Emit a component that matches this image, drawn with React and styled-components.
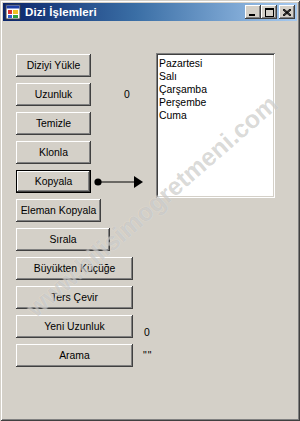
import React from 'react';
import styled, { createGlobalStyle } from 'styled-components';

const GlobalStyle = createGlobalStyle`
	html, body {
		margin: 0;
		padding: 0;
		background: #d4d0c8;
	}
	* {
		box-sizing: border-box;
	}
`;

const Window = styled.div`
	position: relative;
	width: 300px;
	height: 421px;
	padding: 3px;
	background: #d4d0c8;
	box-shadow: inset 1px 1px #d4d0c8, inset -1px -1px #404040,
		inset 2px 2px #ffffff, inset -2px -2px #808080;
	overflow: hidden;
	font-family: 'Liberation Sans', Arial, sans-serif;
	font-size: 10.4px;
	color: #000;
`;

const TitleBar = styled.div`
	display: flex;
	align-items: center;
	height: 18px;
	padding: 0 2px 0 2px;
	background: linear-gradient(to right, #0a246a 0%, #3a6ea5 45%, #a6caf0 100%);
`;

const TitleText = styled.span`
	margin-left: 4px;
	flex: 1;
	color: #fff;
	font-weight: bold;
	font-size: 11.5px;
	letter-spacing: 0.1px;
`;

const CaptionButton = styled.div`
	width: 16px;
	height: 14px;
	margin-left: ${(p) => (p.$gap ? '2px' : '0')};
	display: flex;
	align-items: center;
	justify-content: center;
	background: #d4d0c8;
	box-shadow: inset -1px -1px #404040, inset 1px 1px #ffffff,
		inset -2px -2px #808080, inset 2px 2px #d4d0c8;
`;

const Content = styled.div`
	display: flex;
	align-items: flex-start;
	padding: 33px 0 0 13px;
`;

const Column = styled.div`
	display: flex;
	flex-direction: column;
	gap: 6px;
	width: 140px;
`;

const Row = styled.div`
	display: flex;
	align-items: center;
	height: 23px;
`;

const Button = styled.div`
	width: ${(p) => p.$w}px;
	height: 23px;
	display: flex;
	align-items: center;
	justify-content: center;
	background: #d4d0c8;
	white-space: nowrap;
	box-shadow: ${(p) =>
		p.$default
			? 'inset 0 0 0 1px #000, inset -2px -2px #404040, inset 2px 2px #ffffff, inset -3px -3px #808080'
			: 'inset -1px -1px #404040, inset 1px 1px #ffffff, inset -2px -2px #808080, inset 2px 2px #d4d0c8'};
`;

const SideLabel = styled.span`
	margin-left: ${(p) => p.$left}px;
	padding-top: ${(p) => (p.$drop ? 12 : 0)}px;
	line-height: 13px;
	letter-spacing: ${(p) => (p.$wide ? '1px' : '0')};
`;

const ArrowWrap = styled.div`
	margin-left: 3px;
	display: flex;
	align-items: center;
	padding-top: 1px;
`;

const ListBox = styled.div`
	width: 119px;
	height: 145px;
	margin-top: -1px;
	padding: 4px 3px;
	background: #fff;
	line-height: 13px;
	box-shadow: inset 1px 1px #808080, inset -1px -1px #ffffff,
		inset 2px 2px #404040, inset -2px -2px #d4d0c8;
`;

const Watermark = styled.div`
	position: absolute;
	left: 152px;
	top: 206px;
	transform: translate(-50%, -50%) rotate(-41deg);
	white-space: nowrap;
	font-family: 'Liberation Sans', Arial, sans-serif;
	font-weight: bold;
	font-size: 25px;
	color: rgba(130, 128, 122, 0.3);
	text-shadow: 0 0 1px rgba(255, 255, 255, 0.6);
	pointer-events: none;
`;

const AppIcon = () => (
	<svg width="16" height="16" viewBox="0 0 16 16">
		<rect x="1" y="1" width="14" height="14" fill="#fff" stroke="#404040" />
		<rect x="1.5" y="1.5" width="13" height="3" fill="#1c3fa8" />
		<rect x="3" y="6" width="4" height="4" fill="#d83030" />
		<rect x="8" y="6" width="5" height="4" fill="#f0c020" />
		<rect x="3" y="11" width="4" height="3" fill="#3060d0" />
		<rect x="8" y="11" width="5" height="3" fill="#30a040" />
	</svg>
);

const Arrow = () => (
	<svg width="50" height="14" viewBox="0 0 50 14">
		<circle cx="4" cy="7" r="3.6" fill="#000" />
		<line x1="4" y1="7" x2="41" y2="7" stroke="#000" strokeWidth="1.2" />
		<polygon points="40,1 49,7 40,13" fill="#000" />
	</svg>
);

const buttons = [
	{ text: 'Diziyi Yükle', w: 75 },
	{ text: 'Uzunluk', w: 75, side: <SideLabel $left={33}>0</SideLabel> },
	{ text: 'Temizle', w: 75 },
	{ text: 'Klonla', w: 75 },
	{ text: 'Kopyala', w: 75, def: true, arrow: true },
	{ text: 'Eleman Kopyala', w: 85 },
	{ text: 'Sırala', w: 94 },
	{ text: 'Büyükten Küçüğe', w: 117 },
	{ text: 'Ters Çevir', w: 117 },
	{ text: 'Yeni Uzunluk', w: 117, side: <SideLabel $left={11} $drop>0</SideLabel> },
	{ text: 'Arama', w: 117, side: <SideLabel $left={10} $wide>""</SideLabel> },
];

const days = ['Pazartesi', 'Salı', 'Çarşamba', 'Perşembe', 'Cuma'];

export default function App() {
	return (
		<>
			<GlobalStyle />
			<Window>
				<TitleBar>
					<AppIcon />
					<TitleText>Dizi İşlemleri</TitleText>
					<CaptionButton>
						<svg width="8" height="8" viewBox="0 0 8 8">
							<rect x="0" y="6" width="6" height="2" fill="#000" />
						</svg>
					</CaptionButton>
					<CaptionButton>
						<svg width="9" height="9" viewBox="0 0 9 9">
							<rect x="0.5" y="0.5" width="8" height="8" fill="none" stroke="#000" />
							<rect x="0" y="0" width="9" height="2" fill="#000" />
						</svg>
					</CaptionButton>
					<CaptionButton $gap>
						<svg width="8" height="7" viewBox="0 0 8 7">
							<path d="M0 0 L8 7 M1 0 L8 6 M0 1 L7 7 M8 0 L0 7 M7 0 L0 6 M8 1 L1 7" stroke="#000" strokeWidth="0.9" />
						</svg>
					</CaptionButton>
				</TitleBar>
				<Content>
					<Column>
						{buttons.map((b) => (
							<Row key={b.text}>
								<Button $w={b.w} $default={b.def}>
									{b.text}
								</Button>
								{b.side}
								{b.arrow && (
									<ArrowWrap>
										<Arrow />
									</ArrowWrap>
								)}
							</Row>
						))}
					</Column>
					<ListBox>
						{days.map((d) => (
							<div key={d}>{d}</div>
						))}
					</ListBox>
				</Content>
				<Watermark>www.bilisimogretmeni.com</Watermark>
			</Window>
		</>
	);
}
